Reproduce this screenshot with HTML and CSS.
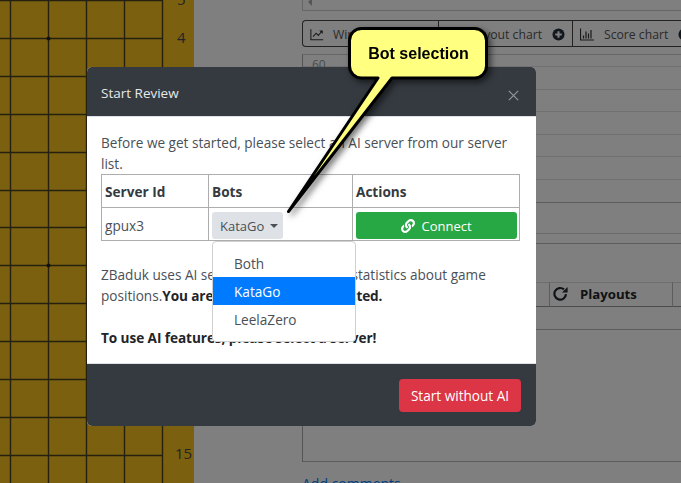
FILE: index.html
```html
<!DOCTYPE html>
<html lang="en">
<head>
<meta charset="utf-8">
<title>Start Review</title>
<link rel="stylesheet" href="styles.css">
</head>
<body>
<div class="page">
  <svg class="board" width="194" height="483" viewBox="0 0 194 483">
    <g class="grid">
      <path d="M10.5 0V483M48.5 0V483M86.5 0V483M124.5 0V483M162.5 0V483"/>
      <path d="M0 0.5H162M0 38.5H162M0 76.5H162M0 114.5H162M0 152.5H162M0 190.5H162M0 227.5H162M0 265.5H162M0 303.5H162M0 341.5H162M0 379.5H162M0 417.5H162M0 455.5H162"/>
    </g>
    <circle class="star" cx="48.5" cy="38.5" r="2"/>
    <circle class="star" cx="48.5" cy="265.5" r="2"/>
    <text class="coord" x="177" y="5">5</text>
    <text class="coord" x="177" y="43">4</text>
    <text class="coord" x="175" y="459">15</text>
  </svg>
  <div class="side">
    <div class="scrollbar"><span class="arrow"></span></div>
    <div class="tabs">
      <div class="tab tab-a">
        <svg class="ico" viewBox="0 0 16 14"><path d="M1 1V13H15" /><path d="M3.5 9.5L7 5.5L9.5 8L14 3"/><path class="fill" d="M10.5 2.5H14.5V6.5Z"/></svg>
        <span>Winrate chart</span>
      </div>
      <div class="tab tab-b">
        <span class="tab-label">Playout chart</span>
        <svg class="plus" viewBox="0 0 14 14"><circle cx="7" cy="7" r="6.5"/><path d="M7 3.5V10.5M3.5 7H10.5"/></svg>
      </div>
      <div class="tab tab-c">
        <svg class="ico" viewBox="0 0 14 12"><path d="M0.5 0V11.5H14"/><path d="M3.5 7V10M6 3V10M8.5 5V10M11 1.5V10"/></svg>
        <span>Score chart</span>
        <svg class="plus" viewBox="0 0 14 14"><circle cx="7" cy="7" r="6.5"/><path d="M7 3.5V10.5M3.5 7H10.5"/></svg>
      </div>
    </div>
    <div class="chart">
      <div class="rule rule-first"><span class="tick">60</span></div>
      <div class="rule"></div>
      <div class="rule"></div>
      <div class="rule"></div>
      <div class="rule"></div>
      <div class="rule"></div>
      <div class="band band-tall"></div>
      <div class="band band-short"></div>
      <div class="band band-mid"></div>
      <div class="stats">
        <div class="stat stat-wide"></div>
        <div class="stat stat-play">
          <svg class="redo" viewBox="0 0 16 16"><path d="M13 8.2A5.8 5.8 0 1 1 11 3.4"/><path class="fill" d="M14.6 1V6.6H9Z"/></svg>
          <b>Playouts</b>
        </div>
        <div class="stat stat-last"></div>
      </div>
      <div class="band band-stat"></div>
      <div class="band band-end"></div>
    </div>
    <a class="add" href="#">Add comments</a>
  </div>
</div>
<div class="backdrop"></div>
<div class="modal">
  <div class="modal-head">
    <h5>Start Review</h5>
    <svg class="close" width="11" height="11" viewBox="0 0 13 13"><path d="M1 1L12 12M12 1L1 12"/></svg>
  </div>
  <div class="modal-body">
    <p class="intro">Before we get started, please select an AI server from our server list.</p>
    <table>
      <tr><th class="c1">Server Id</th><th class="c2">Bots</th><th class="c3">Actions</th></tr>
      <tr>
        <td>gpux3</td>
        <td class="bots">
          <button class="toggle">KataGo<span class="caret"></span></button>
          <div class="menu">
            <div class="item">Both</div>
            <div class="item active">KataGo</div>
            <div class="item">LeelaZero</div>
          </div>
        </td>
        <td><button class="connect"><svg class="link" width="14" height="14" viewBox="0 0 512 512"><path d="M326.612 185.391c59.747 59.809 58.927 155.698.36 214.59-.11.12-.24.25-.36.37l-67.2 67.2c-59.27 59.27-155.699 59.262-214.96 0-59.27-59.26-59.27-155.7 0-214.96l37.106-37.106c9.84-9.84 26.786-3.3 27.294 10.606.648 17.722 3.826 35.527 9.69 52.721 1.986 5.822.567 12.262-3.783 16.612l-13.087 13.087c-28.026 28.026-28.905 73.66-1.155 101.96 28.024 28.579 74.086 28.749 102.325.51l67.2-67.19c28.191-28.191 28.073-73.757 0-101.83-3.701-3.694-7.429-6.564-10.341-8.569a16.037 16.037 0 0 1-6.947-12.606c-.396-10.567 3.348-21.456 11.698-29.806l21.054-21.055c5.521-5.521 14.182-6.199 20.584-1.731a152.482 152.482 0 0 1 20.522 17.197zM467.547 44.449c-59.261-59.262-155.69-59.27-214.96 0l-67.2 67.2c-.12.12-.25.25-.36.37-58.566 58.892-59.387 154.781.36 214.59a152.454 152.454 0 0 0 20.521 17.196c6.402 4.468 15.064 3.789 20.584-1.731l21.054-21.055c8.35-8.35 12.094-19.239 11.698-29.806a16.037 16.037 0 0 0-6.947-12.606c-2.912-2.005-6.64-4.875-10.341-8.569-28.073-28.073-28.191-73.639 0-101.83l67.2-67.19c28.239-28.239 74.3-28.069 102.325.51 27.75 28.3 26.872 73.934-1.155 101.96l-13.087 13.087c-4.35 4.35-5.769 10.79-3.783 16.612 5.864 17.194 9.042 34.999 9.69 52.721.509 13.906 17.454 20.446 27.294 10.606l37.106-37.106c59.271-59.259 59.271-155.699.001-214.959z"/></svg>Connect</button></td>
      </tr>
    </table>
    <p class="about">ZBaduk uses AI servers to generate the statistics about game positions.<b>You are not currently connected.</b></p>
    <p class="must"><b>To use AI features, please select a server!</b></p>
  </div>
  <div class="modal-foot">
    <button class="start">Start without AI</button>
  </div>
</div>
<svg class="callout" width="260" height="220" viewBox="270 10 260 220">
  <path class="balloon" d="M361.5 28.5H474.5A12 12 0 0 1 486.5 40.5V66A12 12 0 0 1 474.5 78H392L288.5 211.5L378 78H361.5A12 12 0 0 1 349.5 66V40.5A12 12 0 0 1 361.5 28.5Z"/>
  <text class="balloon-text" x="418.5" y="58.5">Bot selection</text>
</svg>
</body>
</html>
```
FILE: styles.css
```css
html, body {
  margin: 0;
  padding: 0;
  width: 681px;
  height: 483px;
  overflow: hidden;
}
body {
  font-family: "Open Sans", "Noto Sans", sans-serif;
  font-size: 13.6px;
  color: #495057;
  background: #fff;
}
.page {
  display: flex;
  width: 681px;
  height: 483px;
  gap: 108px;
}
.board {
  flex: none;
  display: block;
  background: #f4c01e;
}
.grid path {
  fill: none;
  stroke: #4a4020;
  stroke-width: 1.4;
}
.star { fill: #222; }
.coord {
  font-size: 15px;
  fill: #4a4a4a;
}
.side {
  flex: none;
  width: 379px;
}
.scrollbar {
  height: 10px;
  border: 1px solid #ccc;
  border-top: 0;
  border-right: 0;
  position: relative;
}
.arrow {
  position: absolute;
  left: 5px;
  top: -2px;
  border: 4px solid transparent;
  border-right-color: #aaa;
  border-left: 0;
}
.tabs {
  display: flex;
  margin-top: 9px;
  height: 27px;
  box-sizing: border-box;
  border: 1px solid #444;
  border-right: 0;
  border-radius: 4px 0 0 4px;
  color: #555;
  font-size: 12.2px;
  white-space: nowrap;
  overflow: hidden;
}
.tab {
  display: flex;
  align-items: center;
  flex: none;
  box-sizing: border-box;
  padding-top: 1px;
  border-right: 1px solid #444;
}
.tab-a { width: 136px; padding-left: 7px; gap: 9px; }
.tab-b { width: 134px; justify-content: flex-end; padding-right: 7px; gap: 10px; }
.tab-c { width: 110px; padding-left: 7px; gap: 10px; border-right: 0; }
.ico {
  width: 14px;
  height: 13px;
  flex: none;
}
.ico path {
  fill: none;
  stroke: #333;
  stroke-width: 1.2;
}
.ico path.fill { fill: #333; stroke: none; }
.plus {
  width: 13px;
  height: 13px;
  flex: none;
}
.plus circle { fill: #24303c; }
.plus path { stroke: #fff; stroke-width: 2.2; fill: none; }
.chart {
  margin-top: 7px;
  border-top: 1px solid #ccc;
  border-left: 1px solid #aaa;
  height: 408px;
  box-sizing: border-box;
}
.rule {
  height: 22.6px;
  box-sizing: border-box;
  border-bottom: 1px solid #e2e2e2;
}
.rule-first {
  height: 12px;
  position: relative;
}
.tick {
  position: absolute;
  left: 9px;
  top: 1px;
  font-size: 12px;
  color: #999;
}
.band { box-sizing: border-box; border-bottom: 1px solid #bbb; }
.band-tall { height: 23px; }
.band-short { height: 31px; border-bottom-color: #d5d5d5; }
.band-mid { height: 10px; }
.stats {
  display: flex;
  height: 63px;
  padding-top: 38px;
  box-sizing: border-box;
}
.stat {
  flex: none;
  height: 25px;
  box-sizing: border-box;
  border-top: 1px solid #ddd;
  border-bottom: 1px solid #999;
  border-right: 1px solid #bbb;
}
.stat-wide { width: 246px; border-right: 0; }
.stat-play {
  width: 124px;
  display: flex;
  align-items: center;
  gap: 11px;
  padding-left: 3px;
  color: #212529;
  border-left: 1px solid #bbb;
  font-size: 13.2px;
}
.stat-last { width: 8px; border-right: 0; }
.redo { width: 16px; height: 16px; flex: none; }
.redo path { fill: none; stroke: #212a33; stroke-width: 2.2; }
.redo path.fill { fill: #212a33; stroke: none; }
.band-stat { height: 23px; }
.band-end { height: 132px; }
.add {
  display: block;
  margin-top: 12px;
  color: #007bff;
  text-decoration: none;
  font-size: 14px;
}
.backdrop {
  position: absolute;
  inset: 0;
  background: rgba(0, 0, 0, .5);
}
.modal {
  position: absolute;
  left: 87px;
  top: 67px;
  width: 449px;
  height: 359px;
  display: flex;
  flex-direction: column;
  border-radius: 5px;
  overflow: hidden;
  background: #fff;
}
.modal-head {
  flex: none;
  height: 50px;
  box-sizing: border-box;
  background: #343a40;
  display: flex;
  align-items: center;
  justify-content: space-between;
  padding: 2px 17px 0 14px;
  border-bottom: 1px solid #dee2e6;
}
.modal-head h5 {
  margin: 0;
  font-size: 13.5px;
  font-weight: 500;
  color: #e8e8e8;
}
.close {
  margin-top: 6px;
}
.close path {
  stroke: #8f9295;
  stroke-width: 1.5;
  fill: none;
}
.modal-body {
  flex: 1;
  padding: 15px 15px 0 14px;
  box-sizing: border-box;
}
.intro {
  margin: 0;
  line-height: 21px;
}
table {
  border-collapse: collapse;
  width: 419px;
  table-layout: fixed;
}
th, td {
  border: 1px solid #adadad;
  padding: 4px 3px;
  text-align: left;
  position: relative;
}
th { height: 24px; color: #343a40; font-weight: 700; }
td { height: 25px; padding-top: 4px; padding-bottom: 1px; }
.c1 { width: 100px; }
.c2 { width: 137px; }
.toggle {
  display: flex;
  align-items: center;
  font: inherit;
  font-size: 13px;
  color: #495057;
  background: #dee2e6;
  border: 0;
  border-radius: 3px;
  height: 27px;
  width: 71px;
  padding: 0 0 0 8px;
  box-sizing: border-box;
}
.caret {
  margin-left: 6px;
  border: 4px solid transparent;
  border-top-color: #495057;
  border-bottom: 0;
}
.menu {
  position: absolute;
  left: 3px;
  top: 33px;
  width: 144px;
  height: 101px;
  box-sizing: border-box;
  background: #fff;
  border: 1px solid #d0d0d0;
  border-radius: 4px;
  padding-top: 7px;
  z-index: 1;
}
.item {
  height: 28px;
  line-height: 30px;
  padding-left: 21px;
}
.item.active {
  background: #007bff;
  color: #fff;
}
.connect {
  display: flex;
  align-items: center;
  justify-content: center;
  gap: 6px;
  width: 161px;
  height: 27px;
  margin-left: 0;
  border: 0;
  border-radius: 3px;
  background: #28a745;
  color: #fff;
  font: inherit;
  font-size: 13px;
  padding: 0;
}
.link { fill: #fff; }
.about {
  margin: 23px 0 0;
  line-height: 21px;
}
.about b { color: #212529; letter-spacing: -.1px; }
.must {
  margin: 21px 0 0;
  line-height: 21px;
  color: #212529;
  letter-spacing: -.07px;
}
.modal-foot {
  flex: none;
  height: 63px;
  box-sizing: border-box;
  border-top: 1px solid #dee2e6;
  background: #343a40;
  display: flex;
  justify-content: flex-end;
  align-items: center;
  padding-right: 15px;
}
.start {
  height: 33px;
  width: 122px;
  border: 0;
  border-radius: 4px;
  background: #dc3545;
  color: #fff;
  font: inherit;
  padding: 0;
}
.callout {
  position: absolute;
  left: 270px;
  top: 10px;
  overflow: visible;
  filter: drop-shadow(3px 3px 3px rgba(0, 0, 0, .55));
}
.balloon {
  fill: #ffff80;
  stroke: #000;
  stroke-width: 3;
  stroke-linejoin: round;
}
.balloon-text {
  font-family: "Liberation Sans", Arial, sans-serif;
  font-size: 16px;
  font-weight: 700;
  fill: #000;
  text-anchor: middle;
}
```
